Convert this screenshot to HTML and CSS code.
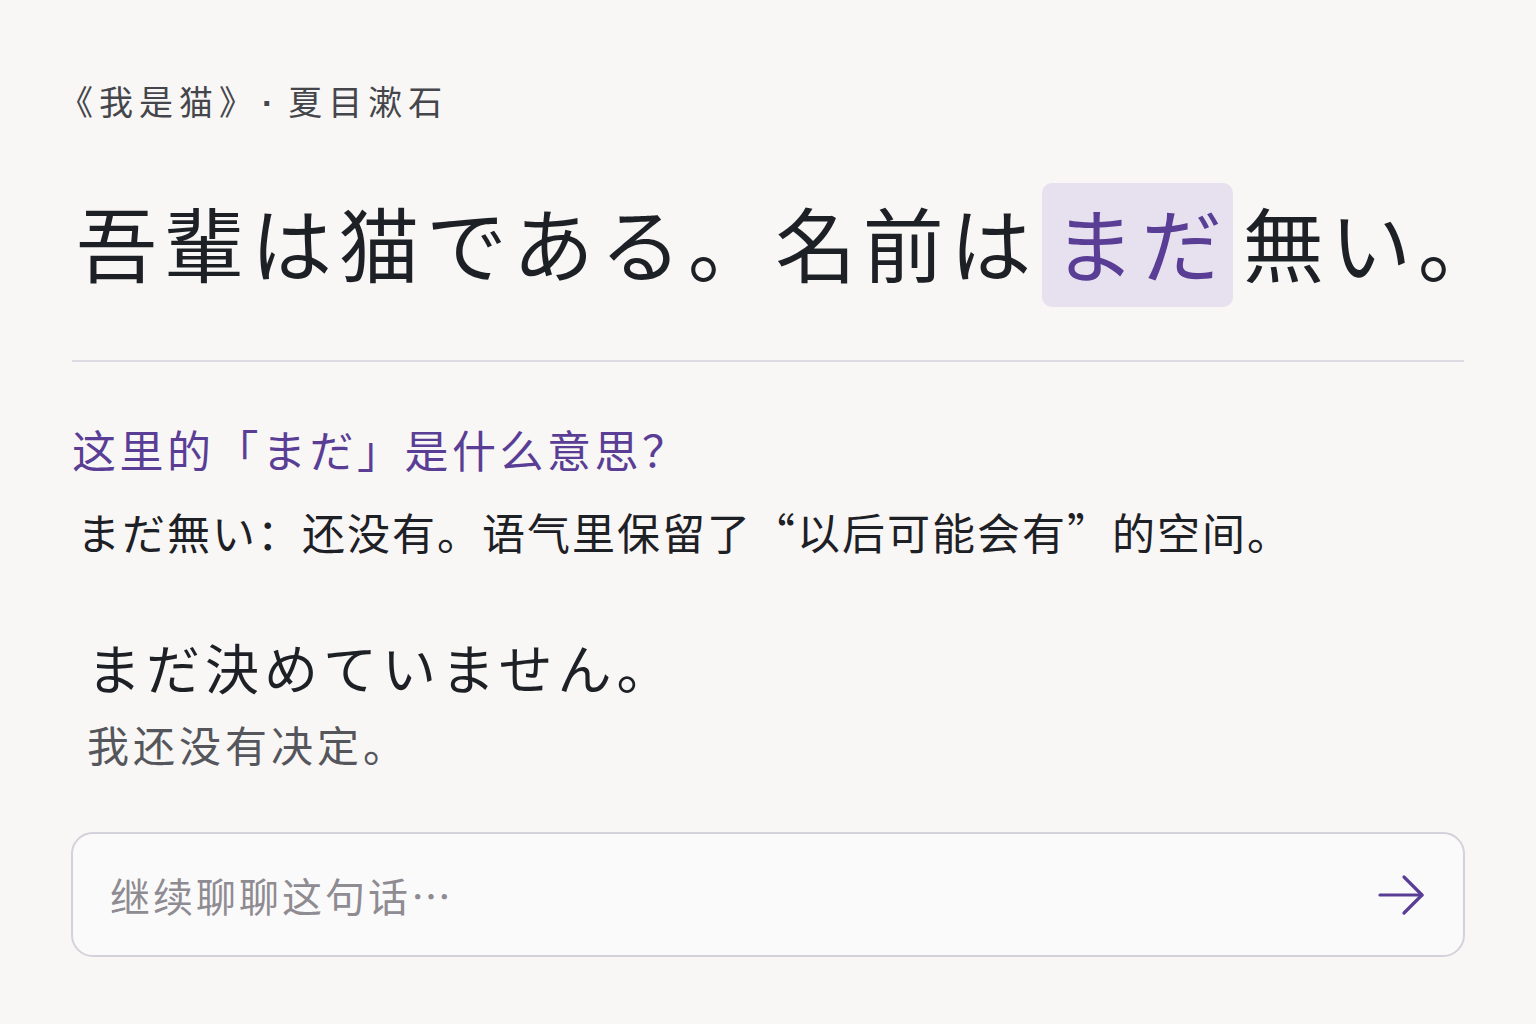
FILE: index.html
```html
<!DOCTYPE html>
<html lang="zh-CN">
  <head>
    <meta charset="UTF-8" />
    <title>我是猫 - 逐句阅读</title>
    <link rel="stylesheet" href="styles.css">
  </head>
  <body>
    <div class="page">
      <!-- 出处 -->
      <p class="source">《我是猫》<span class="dot">·</span>夏目漱石</p>

      <!-- 原文 -->
      <h1 class="sentence" lang="ja">吾輩は猫である。名前は<span class="mark">まだ</span>無い。</h1>

      <hr class="divider" />

      <!-- 解释 -->
      <div class="note">
        <p class="question">这里的「<span lang="ja">まだ</span>」是什么意思？</p>
        <p class="answer"><span lang="ja">まだ無い</span>：还没有。语气里保留了“以后可能会有”的空间。</p>
      </div>

      <!-- 例句 -->
      <div class="example">
        <p class="example-ja" lang="ja">まだ決めていません。</p>
        <p class="example-zh">我还没有决定。</p>
      </div>

      <!-- 输入框 -->
      <div class="composer">
        <span class="placeholder">继续聊聊这句话…</span>
        <button class="send-btn" aria-label="发送">
          <svg width="48" height="48" viewBox="0 0 48 48" fill="none" stroke="#5a3e96" stroke-width="3.2" stroke-linecap="round" stroke-linejoin="round">
            <path d="M3 24 H45" />
            <path d="M27 6 L45 24 L27 42" />
          </svg>
        </button>
      </div>
    </div>
  </body>
</html>
```

FILE: styles.css
```css
body {
  margin: 0;
  background: #f8f7f5;
  color: #1d2025;
  font-family: "Noto Sans CJK SC", "Noto Sans CJK JP", sans-serif;
}

[lang="ja"] {
  font-family: "Noto Sans CJK JP", "Noto Sans CJK SC", sans-serif;
}

p {
  margin: 0;
}

.page {
  display: flex;
  flex-direction: column;
  padding: 80px 72px 0 72px;
}

.source {
  font-size: 34px;
  line-height: 41px;
  letter-spacing: 6px;
  color: #45464b;
  margin-left: -13px;
}

.source .dot {
  font-family: "Liberation Sans", sans-serif;
  font-weight: 700;
  margin: 0 9px 0 20px;
}

.sentence {
  margin: 59px 0 0 4px;
  font-size: 81px;
  font-weight: 400;
  line-height: 116px;
  letter-spacing: 6.5px;
  white-space: nowrap;
}

.mark {
  display: inline-block;
  margin: 0 10px 0 4px;
  padding: 0 4px 8px 12px;
  background: #e6e0ef;
  color: #5a3e96;
  border-radius: 10px;
}

.divider {
  margin: 53px 0 0 0;
  border: none;
  height: 2px;
  background: #dedbe3;
}

.note {
  margin-top: 57px;
}

.question {
  font-size: 44px;
  line-height: 60px;
  color: #5a3e96;
  letter-spacing: 3.5px;
}

.answer {
  margin-top: 22px;
  font-size: 43px;
  line-height: 60px;
  letter-spacing: 2px;
  padding-left: 5px;
}

.example {
  margin-top: 71px;
  padding-left: 15px;
}

.example-ja {
  font-size: 54px;
  line-height: 70px;
  letter-spacing: 5px;
}

.example-zh {
  margin-top: 14px;
  font-size: 42px;
  line-height: 56px;
  color: #55565b;
  letter-spacing: 4px;
}

.composer {
  margin: 60px -1px 0 -1px;
  height: 121px;
  border: 2px solid #d4d1da;
  border-radius: 22px;
  background: #fbfafa;
  display: flex;
  align-items: center;
  justify-content: space-between;
  padding: 0 38px 0 37px;
}

.placeholder {
  font-size: 40px;
  letter-spacing: 3px;
  color: #8f8b92;
}

.send-btn {
  background: none;
  border: none;
  padding: 0;
  display: flex;
  cursor: pointer;
}
```
